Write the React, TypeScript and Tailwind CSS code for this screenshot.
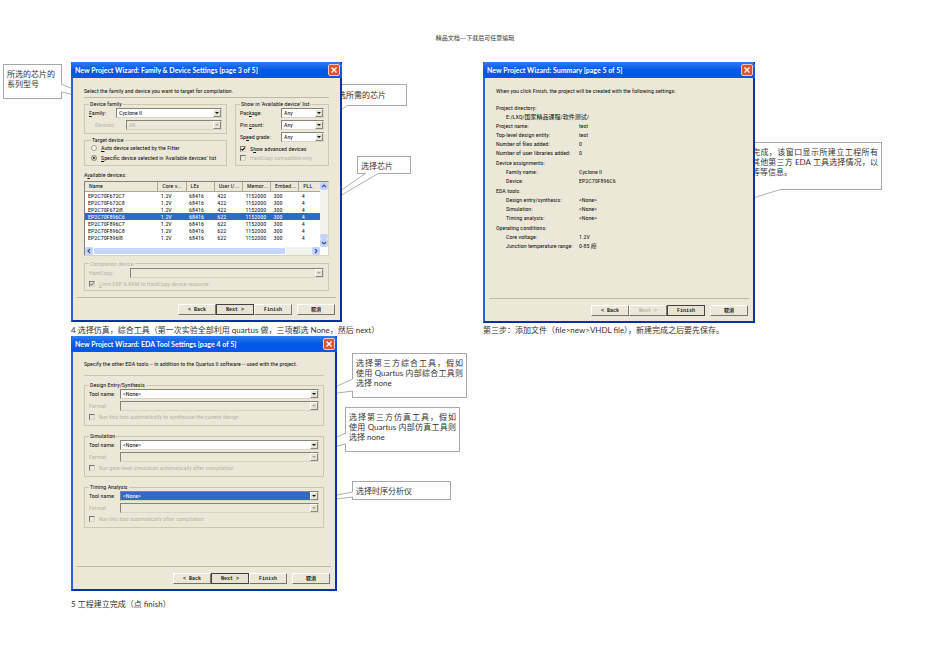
import React, { useId } from "react";

const columns = ["Name", "Core v...", "LEs", "User I/...", "Memor...", "Embed...", "PLL"];

const devices = [
	["EP2C70F672C7", "1.2V", "68416", "422", "1152000", "300", "4"],
	["EP2C70F672C8", "1.2V", "68416", "422", "1152000", "300", "4"],
	["EP2C70F672I8", "1.2V", "68416", "422", "1152000", "300", "4"],
	["EP2C70F896C6", "1.2V", "68416", "622", "1152000", "300", "4"],
	["EP2C70F896C7", "1.2V", "68416", "622", "1152000", "300", "4"],
	["EP2C70F896C8", "1.2V", "68416", "622", "1152000", "300", "4"],
	["EP2C70F896I8", "1.2V", "68416", "622", "1152000", "300", "4"],
];

const summary = [
	[
		{ label: "Project directory:" },
		{ label: "E:/LXQ/国家精品课程/软件测试/", indent: true },
		{ label: "Project name:", value: "test" },
		{ label: "Top-level design entity:", value: "test" },
		{ label: "Number of files added:", value: "0" },
		{ label: "Number of user libraries added:", value: "0" },
	],
	[
		{ label: "Device assignments:" },
		{ label: "Family name:", value: "Cyclone II", indent: true },
		{ label: "Device:", value: "EP2C70F896C6", indent: true },
	],
	[
		{ label: "EDA tools:" },
		{ label: "Design entry/synthesis:", value: "<None>", indent: true },
		{ label: "Simulation:", value: "<None>", indent: true },
		{ label: "Timing analysis:", value: "<None>", indent: true },
	],
	[
		{ label: "Operating conditions:" },
		{ label: "Core voltage:", value: "1.2V", indent: true },
		{ label: "Junction temperature range:", value: "0-85 癈", indent: true },
	],
];

type DialogProps = {
	title: string;
	className: string;
	children: React.ReactNode;
	focus?: "next" | "finish";
};

const Dialog = ({ title, className, children, focus = "next" }: DialogProps) => (
	<section
		className={`relative z-10 flex flex-col border-2 border-t-0 border-[#0a2fae] border-l-[#2c62d6] bg-[#ebe8d8] font-['Roboto_Condensed','Lato','Noto_Sans_CJK_SC',sans-serif] text-[6px] leading-[8px] text-[#111] ${className}`}
	>
		<header className="-mx-[2px] flex h-4 items-center justify-between rounded-t-sm bg-linear-to-b from-[#2b7df5] via-[#0458e4] to-[#0356ea] pr-[2px] pl-1">
			<h2 className="font-['Lato',sans-serif] text-[7px] font-bold whitespace-nowrap text-white">
				{title}
			</h2>
			<button
				aria-label="Close"
				className="flex size-3 items-center justify-center rounded-xs border border-[#f4c9bd] bg-[#dc5530]"
			>
				<svg viewBox="0 0 8 8" className="size-2" stroke="white" strokeWidth="1.3">
					<path d="M1.5 1.5 6.5 6.5M6.5 1.5 1.5 6.5" />
				</svg>
			</button>
		</header>
		<div className="flex-1 px-[11px]">{children}</div>
		<footer className="mx-1 border-t border-[#bdb9a5] pt-[6px] pb-1">
			<div className="flex justify-end pr-px pb-px">
				<WizardButton>&lt; Back</WizardButton>
				<WizardButton disabled={focus === "finish"} active={focus === "next"}>
					Next &gt;
				</WizardButton>
				<WizardButton active={focus === "finish"}>Finish</WizardButton>
				<span className="w-[5px]" />
				<WizardButton>取消</WizardButton>
			</div>
		</footer>
	</section>
);

type WizardButtonProps = {
	children: React.ReactNode;
	active?: boolean;
	disabled?: boolean;
};

const WizardButton = ({ children, active, disabled }: WizardButtonProps) => (
	<button
		disabled={disabled}
		className={`h-[11px] w-[38px] border font-['Liberation_Mono','Noto_Sans_CJK_SC',monospace] text-[5px] leading-[8px] font-bold whitespace-pre ${
			active
				? "border-[#444] bg-[#e6e3d3] text-[#222]"
				: "border-t-white border-r-[#77756a] border-b-[#77756a] border-l-white"
		} ${disabled ? "text-[#b5b2a2]" : "text-[#222]"}`}
	>
		{children}
	</button>
);

type GroupProps = {
	title: string;
	disabled?: boolean;
	className?: string;
	children: React.ReactNode;
};

const Group = ({ title, disabled, className = "", children }: GroupProps) => (
	<fieldset className={`min-w-0 border border-[#cbc8b6] px-1 ${className}`}>
		<legend
			className={`px-px leading-[8px] whitespace-nowrap ${disabled ? "text-[#b9b6a5]" : ""}`}
		>
			{title}
		</legend>
		{children}
	</fieldset>
);

type DropdownProps = {
	label: React.ReactNode;
	value: string;
	labelWidth: string;
	disabled?: boolean;
	selected?: boolean;
};

const Dropdown = ({ label, value, labelWidth, disabled, selected }: DropdownProps) => {
	const id = useId();
	return (
		<div className="flex items-center">
			<label
				htmlFor={id}
				className={`shrink-0 whitespace-nowrap ${labelWidth} ${disabled ? "text-[#b9b6a5]" : ""}`}
			>
				{label}
			</label>
			<div
				className={`relative h-[10px] min-w-0 flex-1 border border-t-[#85837a] border-r-[#d8d5c5] border-b-[#d8d5c5] border-l-[#85837a] ${
					disabled ? "bg-[#ebe8d8]" : "bg-white"
				}`}
			>
				<select
					id={id}
					disabled={disabled}
					defaultValue={value}
					className={`block h-2 w-full appearance-none pl-[2px] leading-[8px] opacity-100 ${
						disabled ? "text-[#b9b6a5]" : ""
					} ${selected ? "bg-[#316ac5] text-white" : ""}`}
				>
					<option>{value}</option>
				</select>
				<span className="pointer-events-none absolute top-0 right-0 flex h-2 w-2 items-center justify-center border border-t-white border-r-[#8b897d] border-b-[#8b897d] border-l-white bg-[#e6e3d3]">
					<svg viewBox="0 0 4 2" className="h-[2px] w-1" fill={disabled ? "#aaa797" : "#111"}>
						<path d="M0 0h4L2 2z" />
					</svg>
				</span>
			</div>
		</div>
	);
};

type CheckProps = {
	children: React.ReactNode;
	checked?: boolean;
	disabled?: boolean;
};

const Check = ({ children, checked, disabled }: CheckProps) => (
	<label className={`flex items-center gap-1 whitespace-nowrap ${disabled ? "text-[#b9b6a5]" : ""}`}>
		<span className="relative size-[6px]">
			<input
				type="checkbox"
				defaultChecked={checked}
				disabled={disabled}
				className={`block size-[6px] appearance-none border border-t-[#77756a] border-r-[#d8d5c5] border-b-[#d8d5c5] border-l-[#77756a] ${
					disabled ? "bg-[#ebe8d8]" : "bg-white"
				}`}
			/>
			{checked && (
				<svg
					viewBox="0 0 6 6"
					className="pointer-events-none absolute inset-0"
					fill="none"
					stroke={disabled ? "#8d8b7f" : "#111"}
					strokeWidth="1.2"
				>
					<path d="M1.3 2.8 2.6 4.2 5 1.6" />
				</svg>
			)}
		</span>
		<span>{children}</span>
	</label>
);

const Radio = ({ children, checked }: { children: React.ReactNode; checked?: boolean }) => (
	<label className="flex items-center gap-1 whitespace-nowrap">
		<input
			type="radio"
			name="target"
			defaultChecked={checked}
			className="size-[6px] appearance-none rounded-full border border-[#a19e90] bg-white checked:bg-[#111] checked:shadow-[inset_0_0_0_1px_white]"
		/>
		<span>{children}</span>
	</label>
);

const ScrollArrow = ({ d, label }: { d: string; label: string }) => (
	<button
		aria-label={label}
		className="flex size-2 shrink-0 items-center justify-center rounded-xs bg-[#c3d3fb]"
	>
		<svg viewBox="0 0 6 6" className="size-[6px]" fill="none" stroke="#3d5687" strokeWidth="1.2">
			<path d={d} />
		</svg>
	</button>
);

const DeviceTable = () => (
	<div className="border border-t-[#85837a] border-r-[#d8d5c5] border-b-[#d8d5c5] border-l-[#85837a] bg-white">
		<div className="flex">
			<div className="min-w-0 flex-1 pb-[6px]">
				<table className="w-full table-fixed border-collapse text-left">
					<colgroup>
						<col className="w-[31%]" />
						<col className="w-[12%]" />
						<col className="w-[12%]" />
						<col className="w-[12%]" />
						<col className="w-[12%]" />
						<col className="w-[12%]" />
						<col />
					</colgroup>
					<thead>
						<tr className="bg-[#ebe8d8]">
							{columns.map((name) => (
								<th
									key={name}
									className="h-[9px] border-r border-b border-[#aaa797] p-0 pl-1 leading-[8px] font-normal whitespace-nowrap last:border-r-0"
								>
									{name}
								</th>
							))}
						</tr>
					</thead>
					<tbody>
						{devices.map((row, index) => (
							<tr key={row[0]} className={index === 3 ? "bg-[#316ac5] text-white" : ""}>
								{row.map((cell, i) => (
									<td key={i} className="h-[7px] p-0 pl-[3px] leading-[7px] whitespace-nowrap">
										{cell}
									</td>
								))}
							</tr>
						))}
					</tbody>
				</table>
			</div>
			<div className="flex w-2 flex-col justify-between bg-[#f3f3ee]">
				<ScrollArrow label="Scroll up" d="M1 4 3 2 5 4" />
				<div>
					<div className="h-[5px] rounded-xs bg-[#c3d3fb]" />
					<ScrollArrow label="Scroll down" d="M1 2 3 4 5 2" />
				</div>
			</div>
		</div>
		<div className="mr-2 flex bg-[#f3f3ee]">
			<ScrollArrow label="Scroll left" d="M4 1 2 3 4 5" />
			<div className="h-2 w-[82%] rounded-xs border border-white bg-[#c6d5fb]" />
			<span className="flex-1" />
			<ScrollArrow label="Scroll right" d="M2 1 4 3 2 5" />
		</div>
	</div>
);

type CalloutProps = {
	className: string;
	tail: string;
	gap: string;
	children: React.ReactNode;
};

// The tail is drawn from the callout's top left corner; gap erases the border where it opens.
const Callout = ({ className, tail, gap, children }: CalloutProps) => (
	<aside className={`absolute border border-[#a8a8a8] bg-white leading-[10px] ${className}`}>
		{children}
		<svg className="pointer-events-none absolute -top-px -left-px size-px overflow-visible" fill="none">
			<path d={gap} stroke="white" strokeWidth="2" />
			<path d={tail} stroke="#b0b0b0" strokeWidth="1" />
		</svg>
	</aside>
);

const FullLine = ({ children }: { children: React.ReactNode }) => (
	<span className="block whitespace-nowrap [text-align-last:justify]">{children}</span>
);

const App = () => {
	return (
		<div className="min-h-screen overflow-x-hidden bg-white font-['Lato','Noto_Sans_CJK_SC',sans-serif] text-[8px] text-[#333]">
			<p className="pt-[34px] text-center text-[6px] leading-[8px]">精品文档---下载后可任意编辑</p>

			<main className="grid grid-cols-2 pt-5 pr-[55px] pl-[71px]">
				<div>
					<div className="relative w-[271px]">
						<Dialog
							title="New Project Wizard: Family & Device Settings [page 3 of 5]"
							className="min-h-[260px]"
						>
							<p className="border-b border-[#bdb9a5] pt-[9px] pb-[2px] whitespace-nowrap">
								Select the family and device you want to target for compilation.
							</p>
							<div className="flex gap-2 pt-[2px]">
								<div className="min-w-0 flex-1">
									<Group title="Device family" className="pb-[3px]">
										<div className="space-y-[2px]">
											<Dropdown
												label={<><u>F</u>amily:</>}
												value="Cyclone II"
												labelWidth="w-[27px]"
											/>
											<Dropdown
												label="Devices:"
												value="All"
												labelWidth="w-[37px] pl-[6px]"
												disabled
											/>
										</div>
									</Group>
									<Group title="Target device" className="mt-[2px] pb-[3px] pl-[6px]">
										<div className="space-y-[2px]">
											<Radio><u>A</u>uto device selected by the Fitter</Radio>
											<Radio checked>
												<u>S</u>pecific device selected in 'Available devices' list
											</Radio>
										</div>
									</Group>
								</div>
								<Group title="Show in 'Available device' list" className="w-[94px]">
									<div className="space-y-[2px]">
										<Dropdown label={<>Pac<u>k</u>age:</>} value="Any" labelWidth="w-[41px]" />
										<Dropdown label={<>Pin <u>c</u>ount:</>} value="Any" labelWidth="w-[41px]" />
										<Dropdown label={<>Sp<u>e</u>ed grade:</>} value="Any" labelWidth="w-[41px]" />
									</div>
									<div className="space-y-px pt-[3px]">
										<Check checked>S<u>h</u>ow advanced devices</Check>
										<Check disabled>HardCopy compatible only</Check>
									</div>
								</Group>
							</div>
							<p className="pt-[5px] pb-[2px]">A<u>v</u>ailable devices:</p>
							<DeviceTable />
							<Group title="Companion device" disabled className="mt-1 pb-[2px]">
								<div className="space-y-[2px]">
									<Dropdown label="HardCopy:" value="" labelWidth="w-[41px]" disabled />
									<Check checked disabled><u>L</u>imit DSP &amp; RAM to HardCopy device resource</Check>
								</div>
							</Group>
						</Dialog>
						<Callout
							className="top-[2px] -left-[68px] h-[35px] w-[59px] px-[3px] pt-1"
							gap="M58.5 20V28"
							tail="M58 20 68 24M58 28 68 30"
						>
							所选的芯片的系列型号
						</Callout>
						<Callout
							className="top-[22px] left-[260px] h-[22px] w-[76px] pt-[5px] pr-5 text-right whitespace-nowrap"
							gap="M0 21.5H17"
							tail="M17 21 8 27"
						>
							选所需的芯片
						</Callout>
						<Callout
							className="top-[94px] left-[286px] h-[18px] w-[54px] pt-1 pl-[3px]"
							gap="M9 17.5H22"
							tail="M9 17-17 35M22 17-17 40"
						>
							选择芯片
						</Callout>
					</div>
					<p className="pt-[2px] leading-[12px] whitespace-nowrap">
						4 选择仿真，综合工具（第一次实验全部利用 quartus 做，三项都选 None，然后 next）
					</p>

					<div className="relative w-[266px]">
						<Dialog
							title="New Project Wizard: EDA Tool Settings [page 4 of 5]"
							className="min-h-[255px]"
						>
							<p className="border-b border-[#cbc8b6] pt-2 pb-[7px] whitespace-nowrap">
								Specify the other EDA tools -- in addition to the Quartus II software -- used with the project.
							</p>
							<div className="space-y-[6px] pt-[5px]">
								{[
									["Design Entry/Synthesis", "Run this tool automatically to synthesize the current design"],
									["Simulation", "Run gate-level simulation automatically after compilation"],
									["Timing Analysis", "Run this tool automatically after compilation"],
								].map(([title, option]) => (
									<Group key={title} title={title} className="pb-1">
										<div className="space-y-[2px]">
											<Dropdown
												label="Tool name:"
												value="<None>"
												labelWidth="w-[31px]"
												selected={title === "Timing Analysis"}
											/>
											<Dropdown label="Format:" value="" labelWidth="w-[31px]" disabled />
											<Check disabled>{option}</Check>
										</div>
									</Group>
								))}
							</div>
						</Dialog>
						<Callout
							className="top-[17px] left-[281px] h-[45px] w-[115px] px-[3px] pt-[4px]"
							gap="M.5 26V38"
							tail="M1 26-15 33M1 38-15 40"
						>
							<FullLine>选择第三方综合工具，假如</FullLine>
							<FullLine>使用 Quartus 内部综合工具则</FullLine>
							选择 none
						</Callout>
						<Callout
							className="top-[71px] left-[274px] h-[45px] w-[115px] px-[3px] pt-[4px]"
							gap="M.5 26V37"
							tail="M1 26-8 30M1 37-8 39"
						>
							<FullLine>选择第三方仿真工具，假如</FullLine>
							<FullLine>使用 Quartus 内部仿真工具则</FullLine>
							选择 none
						</Callout>
						<Callout
							className="top-[145px] left-[281px] h-[19px] w-[99px] pt-1 pl-[3px]"
							gap="M.5 11V16"
							tail="M1 11-15 14M1 16-15 18"
						>
							选择时序分析仪
						</Callout>
					</div>
					<p className="pt-[7px] leading-[12px]">5 工程建立完成（点 finish）</p>
				</div>

				<div>
					<div className="relative w-[272px]">
						<Dialog
							title="New Project Wizard: Summary [page 5 of 5]"
							className="min-h-[261px]"
							focus="finish"
						>
							<p className="pt-[9px] pb-2 whitespace-nowrap">
								When you click Finish, the project will be created with the following settings:
							</p>
							<div className="space-y-px">
								{summary.map((section, index) => (
									<dl key={index}>
										{section.map((row) => (
											<div key={row.label} className="flex leading-[9px]">
												<dt className={`w-[83px] whitespace-nowrap ${row.indent ? "pl-[10px]" : ""}`}>
													{row.label}
												</dt>
												<dd>{row.value}</dd>
											</div>
										))}
									</dl>
								))}
							</div>
						</Dialog>
						<Callout
							className="top-[80px] left-[260px] h-[48px] w-[139px] pt-1 pr-[3px] pl-[8px]"
							gap="M0 47.5H39"
							tail="M39 47 10 56"
						>
							<FullLine>完成，该窗口显示所建立工程所有</FullLine>
							<FullLine>其他第三方 EDA 工具选择情况，以</FullLine>
							等等信息。
						</Callout>
					</div>
					<p className="pt-px leading-[12px]">
						第三步：添加文件（file&gt;new&gt;VHDL file），新建完成之后要先保存。
					</p>
				</div>
			</main>
		</div>
	);
};

export default App;
